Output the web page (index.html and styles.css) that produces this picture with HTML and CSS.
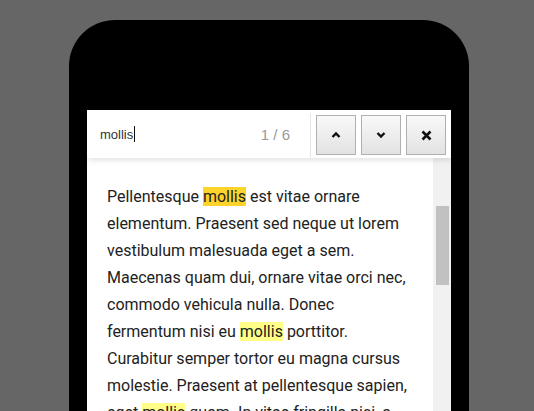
FILE: index.html
```html
<!DOCTYPE html>
<html lang="en">
<head>
    <meta charset="UTF-8">
    <meta name="viewport" content="width=device-width, initial-scale=1.0">
    <title>Find in page</title>
    <link rel="stylesheet" href="styles.css">
</head>
<body>
    <div class="phone">
        <div class="screen">
            <!-- barre de recherche -->
            <div class="search-bar">
                <div class="search-field">
                    <span class="query">mollis</span><span class="caret"></span>
                </div>
                <span class="count">1 / 6</span>
                <div class="divider"></div>
                <button class="btn" title="Previous">
                    <svg width="10" height="8" viewBox="0 0 10 8"><polyline points="1.5,6 5,2.5 8.5,6" fill="none" stroke="#111" stroke-width="2.4"/></svg>
                </button>
                <button class="btn" title="Next">
                    <svg width="10" height="8" viewBox="0 0 10 8"><polyline points="1.5,2 5,5.5 8.5,2" fill="none" stroke="#111" stroke-width="2.4"/></svg>
                </button>
                <button class="btn" title="Close">
                    <svg width="11" height="11" viewBox="0 0 11 11"><path d="M1.5 1.5 L9.5 9.5 M9.5 1.5 L1.5 9.5" fill="none" stroke="#111" stroke-width="2.6"/></svg>
                </button>
            </div>

            <div class="content">
                <div class="text">
                    <p>Pellentesque <mark class="current">mollis</mark> est vitae ornare elementum. Praesent sed neque ut lorem vestibulum malesuada eget a sem. Maecenas quam dui, ornare vitae orci nec, commodo vehicula nulla. Donec fermentum nisi eu <mark>mollis</mark> porttitor. Curabitur semper tortor eu magna cursus molestie. Praesent at pellentesque sapien, eget <mark>mollis</mark> quam. In vitae fringilla nisi, a ultricies sem.</p>
                </div>
                <div class="scrollbar">
                    <div class="thumb"></div>
                </div>
            </div>
        </div>
    </div>
</body>
</html>
```

FILE: styles.css
```css
html, body {
    height: 100%;
    overflow: hidden;
}
body {
    margin: 0;
    background-color: #666666;
    font-family: Roboto, "Liberation Sans", sans-serif;
}
.phone {
    width: 364px;
    margin: 20px 0 0 69px;
    padding: 90px 18px 0 18px;
    background: #000;
    border-radius: 46px 46px 0 0;
    height: 500px;
}
.screen {
    background: #fff;
    height: 100%;
    display: flex;
    flex-direction: column;
}
.search-bar {
    position: relative;
    z-index: 1;
    height: 48px;
    display: flex;
    align-items: center;
    background: #fff;
    box-shadow: 0 2px 6px rgba(0, 0, 0, 0.12);
    padding-right: 5px;
}
.search-field {
    flex: 1;
    padding-left: 13px;
    display: flex;
    align-items: center;
    font-family: "Liberation Sans", Arial, sans-serif;
    font-size: 13px;
    color: #333;
}
.caret {
    display: inline-block;
    width: 1px;
    height: 16px;
    background: #111;
    margin-left: 1px;
}
.count {
    font-family: "Liberation Sans", Arial, sans-serif;
    font-size: 15px;
    color: #999;
    margin-right: 20px;
}
.divider {
    width: 1px;
    align-self: stretch;
    margin: 3px 5px 0 0;
    background: #e6e6e6;
}
.btn {
    width: 40px;
    height: 40px;
    margin: 2px 0 0 0;
    border: 1px solid #b0b0b0;
    background: linear-gradient(#f9f9f9, #e2e2e2);
    padding: 0;
    display: flex;
    align-items: center;
    justify-content: center;
}
.btn + .btn {
    margin-left: 5px;
}
.content {
    flex: 1;
    display: flex;
}
.text {
    flex: 1;
    padding: 25px 20px 0 20px;
}
.text p {
    margin: 0;
    font-size: 16px;
    line-height: 27px;
    color: #222;
}
mark {
    background: #ffff88;
    color: inherit;
}
mark.current {
    background: #ffd42a;
}
.scrollbar {
    width: 18px;
    background: #f1f1f1;
    padding-top: 48px;
}
.thumb {
    width: 13px;
    height: 79px;
    margin-left: 3px;
    background: #c1c1c1;
}
```
